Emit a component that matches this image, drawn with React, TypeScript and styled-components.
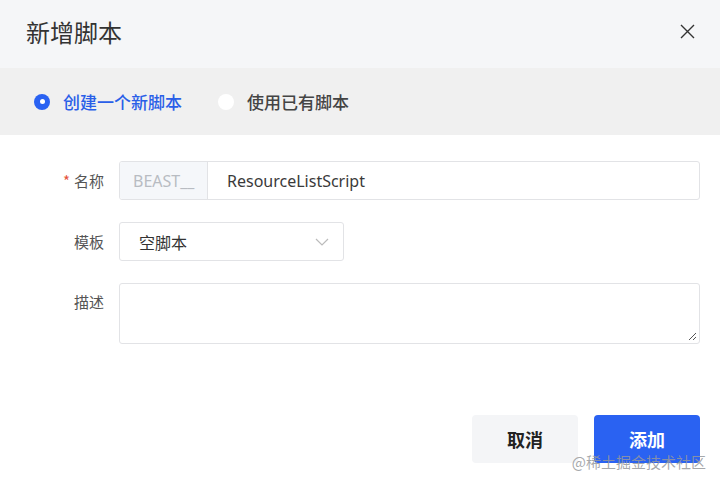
import React from "react";
import styled, { createGlobalStyle } from "styled-components";

const Global = createGlobalStyle`
  html, body { margin: 0; padding: 0; background: #fff; }
  body { font-family: "Noto Sans", "Noto Sans CJK SC", sans-serif; }
  * { box-sizing: border-box; }
`;

const Dialog = styled.div`
  position: relative;
  width: 720px;
  height: 486px;
  background: #fff;
  display: flex;
  flex-direction: column;
  overflow: hidden;
`;

const Header = styled.div`
  height: 68px;
  background: #f5f6f8;
  display: flex;
  align-items: center;
  justify-content: space-between;
  padding: 0 24px 6px 26px;
`;

const Title = styled.div`
  font-family: "Noto Sans CJK SC", sans-serif;
  font-size: 24px;
  color: #333;
  letter-spacing: 0;
`;

const Close = styled.button`
  border: none;
  background: none;
  padding: 0;
  width: 18px;
  height: 18px;
  display: flex;
  align-items: center;
  justify-content: center;
  cursor: pointer;
`;

const RadioBar = styled.div`
  height: 67px;
  background: #f0f0f0;
  display: flex;
  align-items: center;
  padding-left: 34px;
  gap: 36px;
`;

const RadioItem = styled.label<{ $checked?: boolean }>`
  display: flex;
  align-items: center;
  gap: 13px;
  font-family: "Noto Sans CJK SC", sans-serif;
  font-size: 17px;
  font-weight: 500;
  color: ${(p) => (p.$checked ? "#2a5fe8" : "#444")};
`;

const RadioDot = styled.span<{ $checked?: boolean }>`
  width: 16px;
  height: 16px;
  border-radius: 50%;
  background: ${(p) => (p.$checked ? "#2a62f2" : "#fff")};
  display: flex;
  align-items: center;
  justify-content: center;
  &::after {
    content: "";
    width: 5px;
    height: 5px;
    border-radius: 50%;
    background: #fff;
    display: ${(p) => (p.$checked ? "block" : "none")};
  }
`;

const Form = styled.div`
  display: flex;
  flex-direction: column;
  gap: 22px;
  padding: 26px 20px 0 0;
`;

const Row = styled.div<{ $top?: boolean }>`
  display: grid;
  grid-template-columns: 104px 1fr;
  column-gap: 15px;
  align-items: ${(p) => (p.$top ? "start" : "center")};
`;

const Label = styled.div<{ $top?: boolean }>`
  text-align: right;
  font-family: "Noto Sans CJK SC", sans-serif;
  font-size: 15px;
  color: #555;
  padding-top: ${(p) => (p.$top ? "8px" : "0")};
`;

const Star = styled.span`
  color: #e5533c;
  margin-right: 4px;
`;

const InputGroup = styled.div`
  display: flex;
  height: 39px;
  border: 1px solid #e2e3e6;
  border-radius: 3px;
  overflow: hidden;
`;

const Prefix = styled.div`
  width: 88px;
  background: #f5f7fa;
  border-right: 1px solid #e2e3e6;
  display: flex;
  align-items: center;
  padding-left: 13px;
  font-size: 16px;
  color: #b8bcc2;
`;

const Value = styled.div`
  flex: 1;
  display: flex;
  align-items: center;
  padding-left: 19px;
  font-size: 16px;
  color: #3a3a3a;
`;

const Select = styled.div`
  width: 225px;
  height: 39px;
  border: 1px solid #e2e3e6;
  border-radius: 3px;
  display: flex;
  align-items: center;
  justify-content: space-between;
  padding: 0 14px 0 19px;
  font-family: "Noto Sans CJK SC", sans-serif;
  font-size: 16px;
  color: #333;
`;

const TextArea = styled.div`
  position: relative;
  height: 61px;
  border: 1px solid #e2e3e6;
  border-radius: 3px;
`;

const Grip = styled.svg`
  position: absolute;
  right: 2px;
  bottom: 2px;
`;

const Footer = styled.div`
  margin-top: auto;
  display: flex;
  justify-content: flex-end;
  gap: 16px;
  padding: 0 20px 23px 0;
`;

const Button = styled.button<{ $primary?: boolean }>`
  width: 106px;
  height: 48px;
  border: none;
  border-radius: 4px;
  background: ${(p) => (p.$primary ? "#2a62f2" : "#f4f5f7")};
  color: ${(p) => (p.$primary ? "#fff" : "#222")};
  font-family: "Noto Sans CJK SC", sans-serif;
  font-size: 18px;
  font-weight: 700;
  cursor: pointer;
`;

const Watermark = styled.div`
  position: absolute;
  right: 14px;
  bottom: 14px;
  font-family: "Noto Sans CJK SC", sans-serif;
  font-size: 15px;
  color: rgba(150, 152, 156, 0.85);
  pointer-events: none;
`;

export default function App() {
  return (
    <>
      <Global />
      <Dialog>
        <Header>
          <Title>新增脚本</Title>
          <Close aria-label="close">
            <svg width="15" height="15" viewBox="0 0 15 15">
              <path d="M1 1 L14 14 M14 1 L1 14" stroke="#333" strokeWidth="1.4" fill="none" />
            </svg>
          </Close>
        </Header>
        <RadioBar>
          <RadioItem $checked>
            <RadioDot $checked />
            创建一个新脚本
          </RadioItem>
          <RadioItem>
            <RadioDot />
            使用已有脚本
          </RadioItem>
        </RadioBar>
        <Form>
          <Row>
            <Label>
              <Star>*</Star>名称
            </Label>
            <InputGroup>
              <Prefix>BEAST__</Prefix>
              <Value>ResourceListScript</Value>
            </InputGroup>
          </Row>
          <Row>
            <Label>模板</Label>
            <div>
              <Select>
                空脚本
                <svg width="14" height="8" viewBox="0 0 14 8">
                  <path d="M1 1 L7 7 L13 1" stroke="#bbb" strokeWidth="1.2" fill="none" />
                </svg>
              </Select>
            </div>
          </Row>
          <Row $top>
            <Label $top>描述</Label>
            <TextArea>
              <Grip width="9" height="9" viewBox="0 0 9 9">
                <path d="M8 1 L1 8 M8 5 L5 8" stroke="#555" strokeWidth="1" fill="none" />
              </Grip>
            </TextArea>
          </Row>
        </Form>
        <Footer>
          <Button>取消</Button>
          <Button $primary>添加</Button>
        </Footer>
        <Watermark>@稀土掘金技术社区</Watermark>
      </Dialog>
    </>
  );
}
